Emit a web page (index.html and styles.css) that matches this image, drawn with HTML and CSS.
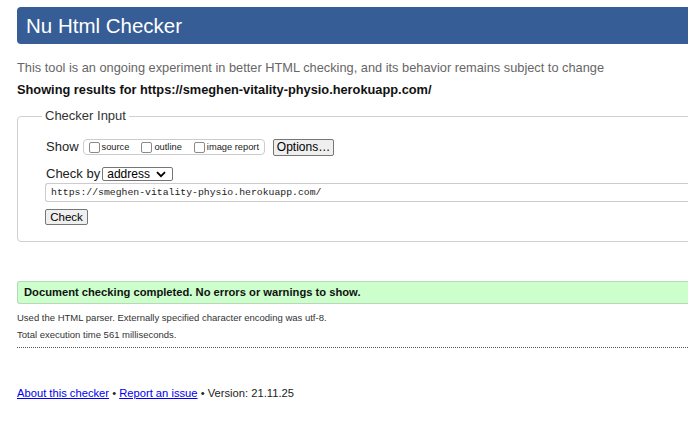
FILE: index.html
```html
<!DOCTYPE html>
<html lang="en">
<head>
<meta charset="utf-8">
<title>Nu Html Checker</title>
<link rel="stylesheet" href="styles.css">
</head>
<body>
<div class="page">
  <h1 class="title">Nu Html Checker</h1>
  <p class="intro">This tool is an ongoing experiment in better HTML checking, and its behavior remains subject to change</p>
  <p class="showing">Showing results for https://smeghen-vitality-physio.herokuapp.com/</p>

  <fieldset class="input-box">
    <legend>Checker Input</legend>
    <div class="row show-row">
      <span class="label">Show</span>
      <span class="opts">
        <span class="opt"><span class="cb"></span>source</span>
        <span class="opt"><span class="cb"></span>outline</span>
        <span class="opt"><span class="cb"></span>image report</span>
      </span>
      <button class="btn btn-options" type="button">Options…</button>
    </div>
    <div class="row by-row">
      <span class="label">Check by</span>
      <span class="select-wrap">
        <select class="select"><option>address</option></select>
        <svg class="chev" width="10" height="7" viewBox="0 0 10 7"><path d="M1 1.2 L5 5.2 L9 1.2" fill="none" stroke="#000" stroke-width="1.8"/></svg>
      </span>
    </div>
    <input class="url" type="text" value="https://smeghen-vitality-physio.herokuapp.com/">
    <div class="row">
      <button class="btn btn-check" type="button">Check</button>
    </div>
  </fieldset>

  <div class="success">Document checking completed. No errors or warnings to show.</div>
  <p class="details">Used the HTML parser. Externally specified character encoding was utf-8.</p>
  <p class="details">Total execution time 561 milliseconds.</p>
  <hr class="dots">

  <p class="footer"><a href="#">About this checker</a> • <a href="#">Report an issue</a> • Version: 21.11.25</p>
</div>
</body>
</html>
```
FILE: styles.css
```css
html, body {
  margin: 0;
  padding: 0;
  overflow: hidden;
  background: #fff;
}
body {
  font-family: "Liberation Sans", Arial, sans-serif;
  color: #222;
}
.page {
  margin: 7px -60px 0 17px;
}
.title {
  margin: 0;
  height: 37px;
  line-height: 37px;
  background: #365d95;
  color: #fff;
  font-weight: normal;
  font-size: 20.5px;
  padding-left: 9px;
  border-radius: 4px 0 0 4px;
}
.intro {
  margin: 15px 0 0;
  font-size: 12.8px;
  line-height: 18px;
  color: #666;
}
.showing {
  margin: 4px 0 0;
  font-size: 12.8px;
  line-height: 18px;
  font-weight: bold;
  color: #111;
}
.input-box {
  margin: 9px 0 0;
  padding: 14px 0 16px 28px;
  border: 1px solid #d0d0d0;
  border-radius: 4px;
  min-width: 0;
}
.input-box legend {
  font-size: 13px;
  color: #333;
  padding: 0 3px;
  margin-left: -4px;
  line-height: 16px;
}
.row {
  display: flex;
  align-items: center;
}
.label {
  font-size: 13px;
  color: #222;
  line-height: 18px;
}
.show-row {
  height: 18px;
}
.opts {
  display: inline-flex;
  align-items: center;
  gap: 12px;
  margin-left: 4px;
  height: 14px;
  padding: 0 5px 0 5px;
  border: 1px solid #ccc;
  border-radius: 4px;
  font-size: 9.3px;
  color: #222;
}
.opt {
  display: inline-flex;
  align-items: center;
  gap: 2px;
}
.cb {
  width: 9px;
  height: 9px;
  border: 1px solid #8a8a8a;
  border-radius: 2px;
  background: #fff;
}
.btn {
  font-family: "Liberation Sans", Arial, sans-serif;
  background: #efefef;
  border: 1px solid #767676;
  border-radius: 2px;
  color: #000;
  padding: 0;
}
.btn-options {
  margin-left: 8px;
  width: 61px;
  height: 17px;
  font-size: 12px;
  line-height: 15px;
}
.by-row {
  margin-top: 10px;
  height: 16px;
}
.select-wrap {
  position: relative;
  display: inline-block;
  margin-left: 2px;
  height: 14px;
}
.select {
  appearance: none;
  -webkit-appearance: none;
  width: 71px;
  height: 14px;
  border: 1px solid #767676;
  border-radius: 2px;
  background: #fff;
  font-family: "Liberation Sans", Arial, sans-serif;
  font-size: 12px;
  line-height: 12px;
  padding: 0 0 0 4px;
  color: #000;
  display: block;
}
.chev {
  position: absolute;
  right: 7px;
  top: 4px;
  pointer-events: none;
}
.url {
  display: block;
  box-sizing: border-box;
  width: 100%;
  height: 19px;
  margin: 1px 0 0 -1px;
  padding: 0 0 0 5px;
  border: 1px solid #ccc;
  border-right: none;
  border-radius: 3px 0 0 3px;
  font-family: "Liberation Mono", "Courier New", monospace;
  font-size: 9.8px;
  color: #222;
  outline: none;
}
.btn-check {
  margin: 7px 0 0 -1px;
  width: 43px;
  height: 16px;
  font-size: 11.5px;
  line-height: 14px;
}
.success {
  margin-top: 39px;
  height: 21px;
  line-height: 21px;
  background: #ccffcc;
  border: 1px solid #b8d8b8;
  border-right: none;
  border-radius: 3px 0 0 3px;
  padding-left: 6px;
  font-size: 11.2px;
  font-weight: bold;
  color: #111;
}
.details {
  margin: 0;
  font-size: 9.5px;
  color: #333;
  line-height: 17px;
}
.success + .details {
  margin-top: 5px;
}
.dots {
  margin: 4px 0 0;
  border: none;
  border-top: 1px dotted #555;
  height: 0;
}
.footer {
  margin: 37px 0 0;
  font-size: 11.2px;
  line-height: 16px;
  color: #222;
}
.footer a {
  color: #0000ee;
  text-decoration: underline;
}
```
